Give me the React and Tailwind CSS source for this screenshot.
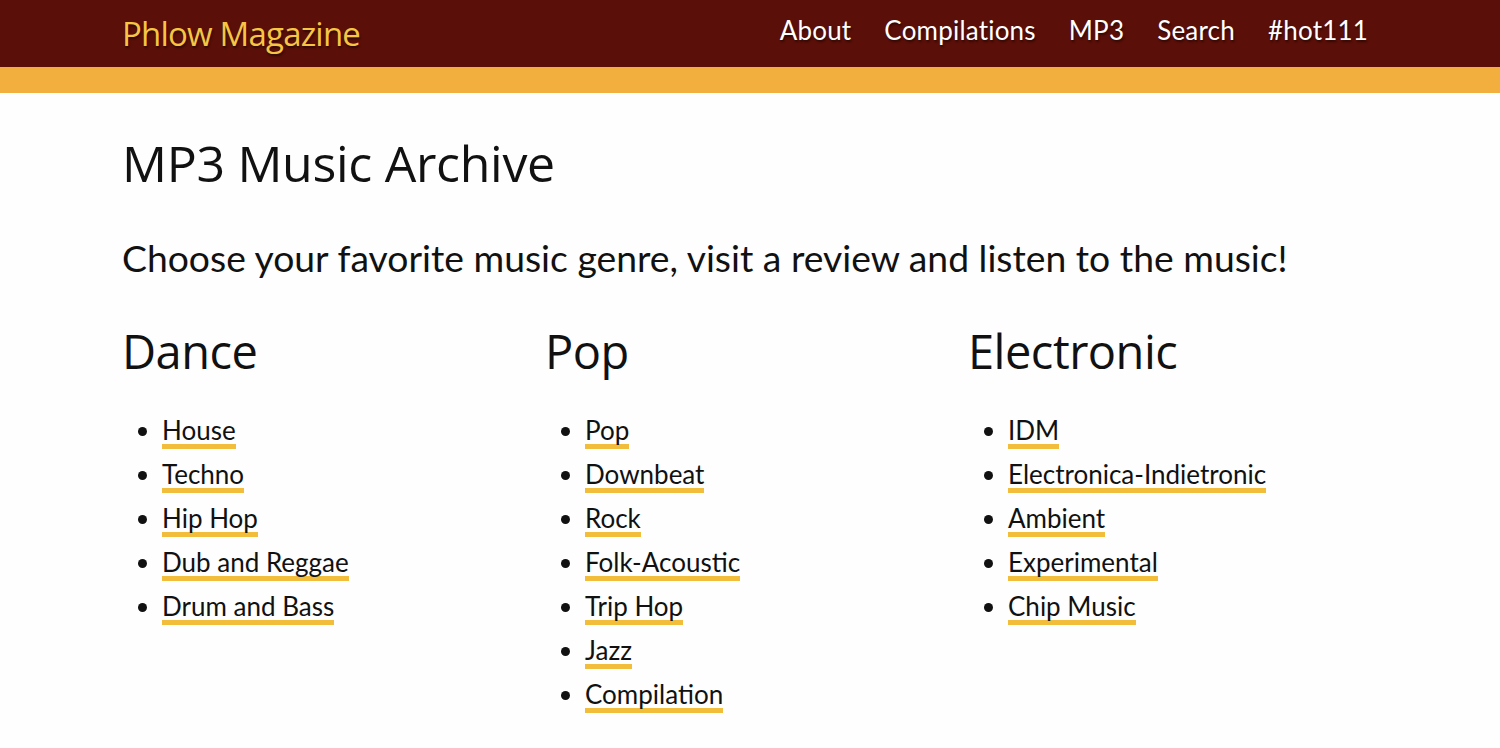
const genres = [
  {
    title: 'Dance',
    items: ['House', 'Techno', 'Hip Hop', 'Dub and Reggae', 'Drum and Bass'],
  },
  {
    title: 'Pop',
    items: ['Pop', 'Downbeat', 'Rock', 'Folk-Acoustic', 'Trip Hop', 'Jazz', 'Compilation'],
  },
  {
    title: 'Electronic',
    items: ['IDM', 'Electronica-Indietronic', 'Ambient', 'Experimental', 'Chip Music'],
  },
];

const navLinks = ['About', 'Compilations', 'MP3', 'Search', '#hot111'];

function GenreColumn({ title, items }) {
  return (
    <div>
      <h2 className="font-['Open_Sans',sans-serif] text-[47px] leading-[60px] text-[#111] tracking-[-0.5px]">
        {title}
      </h2>
      <ul className="mt-[34px] pl-[40px] list-disc marker:text-[#111]">
        {items.map((item) => (
          <li key={item} className="h-[44px] text-[26px] leading-[30px]">
            <a
              href="#"
              className="text-[#111] border-b-[5px] border-[#f2bd3a] inline-block leading-[27px]"
            >
              {item}
            </a>
          </li>
        ))}
      </ul>
    </div>
  );
}

export default function App() {
  return (
    <div className="min-h-screen bg-[#fefefe] font-['Lato',sans-serif] text-[#111]">
      <header>
        <div className="bg-[#5a0f08] h-[67px]">
          <div className="mx-auto w-[1256px] h-full flex items-center justify-between">
            <a
              href="#"
              className="font-['Open_Sans',sans-serif] font-medium text-[33px] tracking-[-0.8px] text-[#f6c544] [text-shadow:1px_2px_2px_rgba(0,0,0,0.45)]"
            >
              Phlow Magazine
            </a>
            <nav className="flex items-center gap-[33px] pr-[10px] -mt-[6px]">
              {navLinks.map((link) => (
                <a
                  key={link}
                  href="#"
                  className="text-white text-[26px] tracking-[0.2px] [text-shadow:1px_2px_2px_rgba(0,0,0,0.45)]"
                >
                  {link}
                </a>
              ))}
            </nav>
          </div>
        </div>
        <div className="bg-[#f3af3d] h-[26px]" />
      </header>

      <main className="mx-auto w-[1256px] pt-[38px]">
        <h1 className="font-['Open_Sans',sans-serif] text-[50px] leading-[64px] tracking-[-0.3px]">
          MP3 Music Archive
        </h1>
        <p className="mt-[41px] text-[37.3px] leading-[44px]">
          Choose your favorite music genre, visit a review and listen to the music!
        </p>
        <div className="mt-[41px] grid grid-cols-[423px_423px_1fr]">
          {genres.map((g) => (
            <GenreColumn key={g.title} title={g.title} items={g.items} />
          ))}
        </div>
      </main>
    </div>
  );
}
